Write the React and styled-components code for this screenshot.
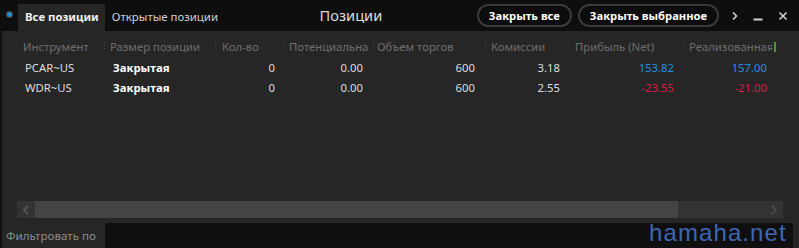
import React from "react";
import styled, { createGlobalStyle } from "styled-components";

const GlobalStyle = createGlobalStyle`
  html, body { margin: 0; padding: 0; background: #111111; }
  body { font-family: "Noto Sans", "Open Sans", sans-serif; }
  * { box-sizing: border-box; }
`;

const Window = styled.div`
  position: relative;
  width: 799px;
  height: 248px;
  background: #101010;
  display: flex;
  flex-direction: column;
  overflow: hidden;
`;

const TopBar = styled.div`
  height: 31px;
  display: flex;
  align-items: flex-end;
  background: #0e0e0e;
`;

const DotWrap = styled.div`
  align-self: flex-start;
  margin: 11px 5px 0 6px;
  width: 7px;
  height: 7px;
  display: flex;
`;

const Tabs = styled.div`
  display: flex;
  align-items: flex-end;
  height: 27px;
`;

const Tab = styled.div`
  height: 27px;
  display: flex;
  align-items: center;
  padding: 0 ${(p) => (p.$active ? "6px 2px 7px" : "7px 2px 7px")};
  font-size: ${(p) => (p.$active ? 11.4 : 11.4)}px;
  font-weight: ${(p) => (p.$active ? 700 : 400)};
  color: ${(p) => (p.$active ? "#f2f2f2" : "#cfcfcf")};
  background: ${(p) => (p.$active ? "#262626" : "transparent")};
  white-space: nowrap;
`;

const Title = styled.div`
  flex: 1;
  align-self: stretch;
  display: flex;
  align-items: center;
  justify-content: center;
  padding-bottom: 2px;
  font-size: 14.6px;
  color: #dcdcdc;
`;

const Buttons = styled.div`
  align-self: stretch;
  display: flex;
  align-items: flex-start;
  gap: 6px;
  padding-top: 4px;
`;

const PillButton = styled.div`
  height: 23px;
  padding: 0 ${(p) => p.$px}px;
  border: 2px solid #3a3a3a;
  border-radius: 12px;
  background: #0c0c0c;
  color: #ffffff;
  font-size: 11.2px;
  font-weight: 700;
  display: flex;
  align-items: center;
  white-space: nowrap;
`;

const Controls = styled.div`
  align-self: stretch;
  display: flex;
  align-items: center;
  padding: 0 4px 0 6px;
  color: #cfcfcf;
`;

const Ctl = styled.div`
  width: ${(p) => p.$w}px;
  height: 31px;
  display: flex;
  align-items: center;
  justify-content: center;
`;

const Body = styled.div`
  flex: 1;
  margin-left: 2px;
  background: #262626;
  display: flex;
  flex-direction: column;
  padding-top: 5px;
`;

const Table = styled.div`
  margin-left: 15px;
  display: flex;
  flex-direction: column;
`;

const Row = styled.div`
  display: flex;
  height: ${(p) => (p.$head ? 21 : 20)}px;
  align-items: center;
`;

const HeadCell = styled.div`
  position: relative;
  flex: 0 0 ${(p) => p.$w}px;
  height: 100%;
  display: flex;
  align-items: center;
  padding-left: ${(p) => p.$pl}px;
  font-size: 11.3px;
  color: #6e6e6e;
  white-space: nowrap;
  overflow: hidden;
`;

const Sep = styled.span`
  position: absolute;
  left: 0;
  top: 6px;
  width: 1px;
  height: 9px;
  background: repeating-linear-gradient(
    to bottom,
    #4a4a4a 0 1px,
    transparent 1px 3px
  );
`;

const GreenMark = styled.span`
  display: block;
  width: 2px;
  height: 10px;
  margin-left: 2px;
  background: #4e9a2e;
`;

const Cell = styled.div`
  flex: 0 0 ${(p) => p.$w}px;
  padding: 0 ${(p) => p.$pr}px 0 ${(p) => p.$pl}px;
  text-align: ${(p) => p.$align};
  font-size: 11.3px;
  font-weight: ${(p) => (p.$bold ? 700 : 400)};
  color: ${(p) =>
    p.$tone === "pos" ? "#1f8ee0" : p.$tone === "neg" ? "#d81e3c" : p.$bold ? "#ffffff" : "#dedede"};
  white-space: nowrap;
  overflow: hidden;
`;

const Spacer = styled.div`
  flex: 1;
`;

const ScrollBar = styled.div`
  margin-left: 15px;
  width: 766px;
  height: 17px;
  display: flex;
  background: #333333;
`;

const ScrollBtn = styled.div`
  width: 18px;
  height: 17px;
  display: flex;
  align-items: center;
  justify-content: center;
  background: #333333;
`;

const Thumb = styled.div`
  width: 643px;
  height: 17px;
  background: #444444;
`;

const Track = styled.div`
  flex: 1;
`;

const FilterRow = styled.div`
  margin-top: 5px;
  height: 25px;
  display: flex;
  align-items: stretch;
`;

const FilterLabel = styled.div`
  width: 103px;
  padding-left: 4px;
  display: flex;
  align-items: center;
  font-size: 11.6px;
  color: #8c8c8c;
  white-space: nowrap;
`;

const FilterInput = styled.div`
  width: 688px;
  background: #0f0f0f;
  border-radius: 3px 3px 0 0;
`;

const Watermark = styled.div`
  position: absolute;
  left: 649px;
  top: 221px;
  font-family: "Liberation Sans", Arial, sans-serif;
  font-size: 24px;
  letter-spacing: 1.1px;
  line-height: 1;
  color: #3e66b4;
`;

const cols = [
  { title: "Инструмент", w: 87, align: "left", pl: 8, pr: 0, hpl: 6 },
  { title: "Размер позиции", w: 111, align: "left", pl: 9, pr: 0, hpl: 6 },
  { title: "Кол-во", w: 68, align: "right", pl: 0, pr: 8, hpl: 7 },
  { title: "Потенциальна", w: 90, align: "right", pl: 0, pr: 10, hpl: 6 },
  { title: "Объем торгов", w: 112, align: "right", pl: 0, pr: 10, hpl: 4 },
  { title: "Комиссии", w: 84, align: "right", pl: 0, pr: 9, hpl: 6 },
  { title: "Прибыль (Net)", w: 115, align: "right", pl: 0, pr: 10, hpl: 6 },
  { title: "Реализованная", w: 88, align: "right", pl: 0, pr: 5, hpl: 5 },
];

const rows = [
  ["PCAR~US", "Закрытая", "0", "0.00", "600", "3.18", "153.82", "157.00"],
  ["WDR~US", "Закрытая", "0", "0.00", "600", "2.55", "-23.55", "-21.00"],
];

const tone = (i, v) => (i >= 6 ? (v.startsWith("-") ? "neg" : "pos") : null);

export default function App() {
  return (
    <>
      <GlobalStyle />
      <Window>
        <TopBar>
          <DotWrap>
            <svg width="7" height="7" viewBox="0 0 7 7">
              <circle cx="3.5" cy="3.5" r="3.3" fill="#5a5a5a" />
              <circle cx="3.5" cy="3.5" r="2.2" fill="#1f8fe6" />
            </svg>
          </DotWrap>
          <Tabs>
            <Tab $active>Все позиции</Tab>
            <Tab>Открытые позиции</Tab>
          </Tabs>
          <Title>Позиции</Title>
          <Buttons>
            <PillButton $px={10}>Закрыть все</PillButton>
            <PillButton $px={10}>Закрыть выбранное</PillButton>
          </Buttons>
          <Controls>
            <Ctl $w={20}>
              <svg width="8" height="10" viewBox="0 0 8 10">
                <path d="M2 1.5 L5.5 5 L2 8.5" stroke="#d0d0d0" strokeWidth="1.6" fill="none" />
              </svg>
            </Ctl>
            <Ctl $w={26}>
              <svg width="10" height="10" viewBox="0 0 10 10">
                <rect x="0.5" y="7.5" width="9" height="2" fill="#d0d0d0" />
              </svg>
            </Ctl>
            <Ctl $w={24}>
              <svg width="10" height="10" viewBox="0 0 10 10">
                <path d="M1.5 1.5 L8.5 8.5 M8.5 1.5 L1.5 8.5" stroke="#d0d0d0" strokeWidth="1.6" fill="none" />
              </svg>
            </Ctl>
          </Controls>
        </TopBar>
        <Body>
          <Table>
            <Row $head>
              {cols.map((c, i) => (
                <HeadCell key={c.title} $w={c.w} $pl={c.hpl}>
                  {i > 0 && <Sep />}
                  {c.title}
                </HeadCell>
              ))}
              <HeadCell $w={10} $pl={0}>
                <Sep />
                <GreenMark />
              </HeadCell>
            </Row>
            {rows.map((r) => (
              <Row key={r[0]}>
                {r.map((v, i) => (
                  <Cell
                    key={i}
                    $w={cols[i].w}
                    $align={cols[i].align}
                    $pl={cols[i].pl}
                    $pr={cols[i].pr}
                    $bold={i === 1}
                    $tone={tone(i, v)}
                  >
                    {v}
                  </Cell>
                ))}
              </Row>
            ))}
          </Table>
          <Spacer />
          <ScrollBar>
            <ScrollBtn>
              <svg width="8" height="10" viewBox="0 0 8 10">
                <path d="M6 1 L2 5 L6 9" stroke="#555555" strokeWidth="2" fill="none" />
              </svg>
            </ScrollBtn>
            <Thumb />
            <Track />
            <ScrollBtn>
              <svg width="8" height="10" viewBox="0 0 8 10">
                <path d="M2 1 L6 5 L2 9" stroke="#4a4a4a" strokeWidth="2" fill="none" />
              </svg>
            </ScrollBtn>
          </ScrollBar>
          <FilterRow>
            <FilterLabel>Фильтровать по</FilterLabel>
            <FilterInput />
          </FilterRow>
        </Body>
        <Watermark>hamaha.net</Watermark>
      </Window>
    </>
  );
}
